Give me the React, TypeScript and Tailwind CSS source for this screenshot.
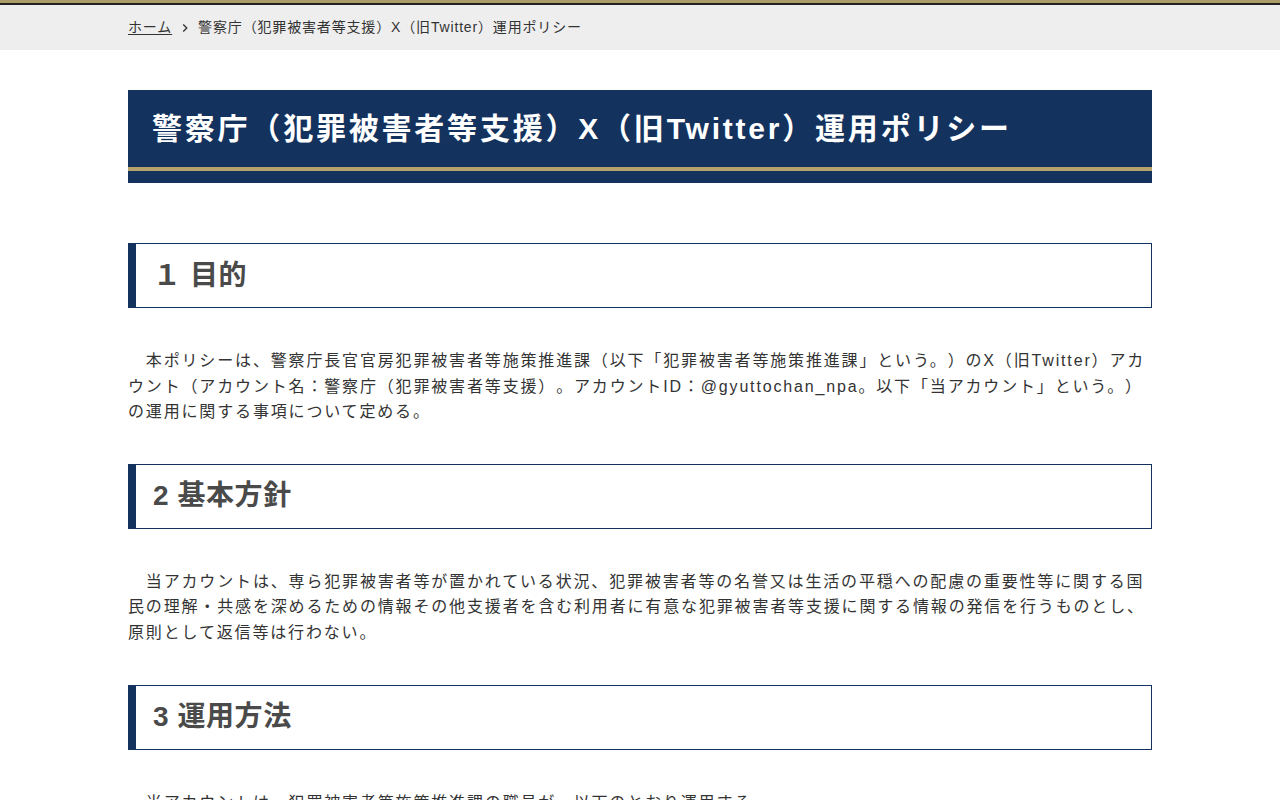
const font = {
  fontFamily: '"Liberation Sans", "Noto Sans CJK JP", sans-serif',
};

type Section = { title: string; body: string };

const sections: Section[] = [
  {
    title: "１ 目的",
    body:
      "　本ポリシーは、警察庁長官官房犯罪被害者等施策推進課（以下「犯罪被害者等施策推進課」という。）のX（旧Twitter）アカウント（アカウント名：警察庁（犯罪被害者等支援）。アカウントID：@gyuttochan_npa。以下「当アカウント」という。）の運用に関する事項について定める。",
  },
  {
    title: "2 基本方針",
    body:
      "　当アカウントは、専ら犯罪被害者等が置かれている状況、犯罪被害者等の名誉又は生活の平穏への配慮の重要性等に関する国民の理解・共感を深めるための情報その他支援者を含む利用者に有意な犯罪被害者等支援に関する情報の発信を行うものとし、原則として返信等は行わない。",
  },
  {
    title: "3 運用方法",
    body: "　当アカウントは、犯罪被害者等施策推進課の職員が、以下のとおり運用する。",
  },
];

function Breadcrumb() {
  return (
    <div className="bg-[#eeeeee] h-[45px] flex items-center">
      <div className="w-[1024px] mx-auto flex items-center text-[14px] text-[#333] tracking-[0.06em]">
        <a href="#" className="underline underline-offset-2 text-[#333]">
          ホーム
        </a>
        <svg width="14" height="14" viewBox="0 0 16 16" className="mx-[6px]">
          <path d="M6 4l4 4-4 4" fill="none" stroke="#333" strokeWidth="1.6" />
        </svg>
        <span>警察庁（犯罪被害者等支援）X（旧Twitter）運用ポリシー</span>
      </div>
    </div>
  );
}

export default function App() {
  return (
    <div className="bg-white min-h-screen [text-spacing-trim:space-all]" style={font}>
      <div className="h-[3px] bg-[#ab9c68]" />
      <div className="h-[2px] bg-[#222]" />
      <Breadcrumb />

      <main className="w-[1024px] mx-auto pt-10">
        <div className="bg-[#13325e]">
          <h1 className="h-[77px] flex items-center pl-6 text-white font-bold text-[30px] tracking-[0.093em]">
            警察庁（犯罪被害者等支援）X（旧Twitter）運用ポリシー
          </h1>
          <div className="h-[4px] bg-[#b4a46b]" />
          <div className="h-[12px]" />
        </div>

        <div className="pt-[60px]">
          {sections.map((s) => (
            <section key={s.title}>
              <h2 className="h-[65px] flex items-center border border-[#13325e] border-l-[8px] pl-[17px] text-[28px] font-bold text-[#4a4a4a] tracking-[0.02em]">
                {s.title}
              </h2>
              <p className="mt-[40px] mb-[39px] text-[16px] leading-[1.6] tracking-[0.115em] text-[#333]">
                {s.body}
              </p>
            </section>
          ))}
        </div>
      </main>
    </div>
  );
}
